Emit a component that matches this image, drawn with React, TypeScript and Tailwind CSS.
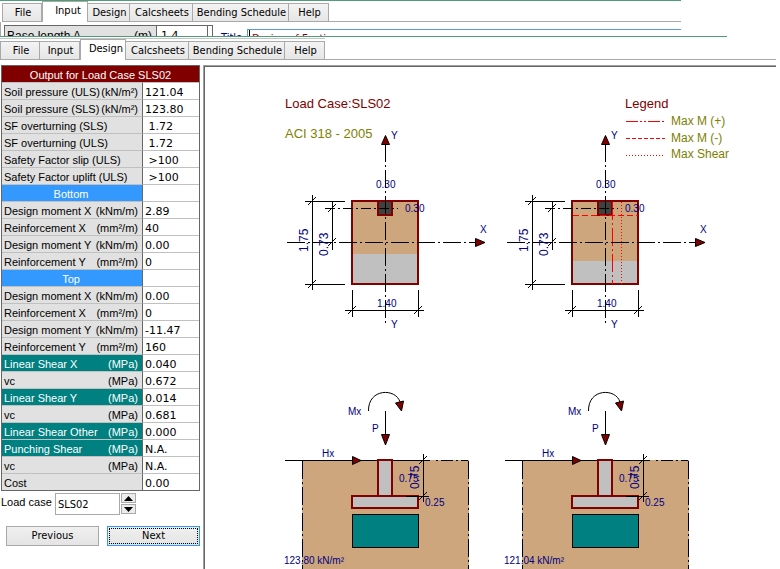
import React, { useState } from "react";

type TabBarProps = { active: string; label: string };

const TAB_WIDTHS: Record<string, string> = {
  File: "w-10",
  Input: "w-10",
  Design: "w-[42px]",
  Calcsheets: "w-[63px]",
  "Bending Schedule": "w-24",
  Help: "w-10",
};

const TABS = ["File", "Input", "Design", "Calcsheets", "Bending Schedule", "Help"];

function TabBar({ active, label }: TabBarProps) {
  return (
    <nav
      aria-label={label}
      className="flex h-[21px] items-end border-b border-[#a9a9a9] font-['DejaVu_Sans_Condensed','DejaVu_Sans',sans-serif] text-[11px] leading-4"
    >
      {TABS.map((tab) =>
        tab === active ? (
          <button
            key={tab}
            type="button"
            aria-current="page"
            className="-mb-px h-[21px] w-[46px] shrink-0 whitespace-nowrap border border-b-0 border-[#a9a9a9] bg-white pb-0.5 pl-1.5 text-black"
          >
            {tab}
          </button>
        ) : (
          <button
            key={tab}
            type="button"
            className={`${TAB_WIDTHS[tab]} h-[18px] shrink-0 whitespace-nowrap border border-b-0 border-l-0 border-[#a9a9a9] bg-linear-to-b from-[#f3f3f3] to-[#e6e6e6] pl-0.5 text-black first:border-l`}
          >
            {tab}
          </button>
        ),
      )}
    </nav>
  );
}

function InputWindow() {
  return (
    <section className="mr-[99px] h-9 overflow-hidden border-t border-[#4f9d76]">
      <div className="pl-0.5">
        <TabBar active="Input" label="Input window" />
      </div>
      <div className="flex items-start border-l border-[#a9a9a9] pl-[3px] pt-[3px]">
        <div className="flex h-6 w-[209px] shrink-0 border border-b-0 border-[#666] font-['Liberation_Sans',sans-serif] text-[12px] leading-5">
          <label htmlFor="base-length" className="flex w-[151px] justify-between bg-[#e1e1e1] pl-0.5 pr-1">
            <span>Base length A</span>
            <span>(m)</span>
          </label>
          <input
            id="base-length"
            defaultValue="1.4"
            className="h-5 w-[52px] border-x border-[#666] pl-1 font-['DejaVu_Sans',sans-serif] text-[11px]"
          />
        </div>
        <label
          htmlFor="title"
          className="ml-2 mt-1 w-[26px] font-['DejaVu_Sans_Condensed','DejaVu_Sans',sans-serif] text-[11px] leading-[18px] text-[#000080]"
        >
          Title
        </label>
        <div className="mt-1 flex h-5 min-w-0 flex-1 border border-r-0 border-[#5b9bd5] pl-px">
          <span className="w-px bg-black" />
          <input
            id="title"
            defaultValue="Design of Footing"
            className="min-w-0 flex-1 pl-0.5 font-['DejaVu_Sans_Condensed','DejaVu_Sans',sans-serif] text-[11px] text-[#800000]"
          />
        </div>
      </div>
    </section>
  );
}

type Row = { label: string; unit?: string; value: string; kind?: "section" | "shear" };

const ROWS: Row[] = [
  { label: "Soil pressure (ULS)", unit: "(kN/m²)", value: "121.04" },
  { label: "Soil pressure (SLS)", unit: "(kN/m²)", value: "123.80" },
  { label: "SF overturning (SLS)", value: " 1.72" },
  { label: "SF overturning (ULS)", value: " 1.72" },
  { label: "Safety Factor slip (ULS)", value: " >100" },
  { label: "Safety Factor uplift (ULS)", value: " >100" },
  { label: "Bottom", value: "", kind: "section" },
  { label: "Design moment X", unit: "(kNm/m)", value: "2.89" },
  { label: "Reinforcement X", unit: "(mm²/m)", value: "40" },
  { label: "Design moment Y", unit: "(kNm/m)", value: "0.00" },
  { label: "Reinforcement Y", unit: "(mm²/m)", value: "0" },
  { label: "Top", value: "", kind: "section" },
  { label: "Design moment X", unit: "(kNm/m)", value: "0.00" },
  { label: "Reinforcement X", unit: "(mm²/m)", value: "0" },
  { label: "Design moment Y", unit: "(kNm/m)", value: "-11.47" },
  { label: "Reinforcement Y", unit: "(mm²/m)", value: "160" },
  { label: "Linear Shear X", unit: "(MPa)", value: "0.040", kind: "shear" },
  { label: "vc", unit: "(MPa)", value: "0.672" },
  { label: "Linear Shear Y", unit: "(MPa)", value: "0.014", kind: "shear" },
  { label: "vc", unit: "(MPa)", value: "0.681" },
  { label: "Linear Shear Other", unit: "(MPa)", value: "0.000", kind: "shear" },
  { label: "Punching Shear", unit: "(MPa)", value: "N.A.", kind: "shear" },
  { label: "vc", unit: "(MPa)", value: "N.A." },
  { label: "Cost", value: "0.00" },
];

function rowTone(kind?: Row["kind"]) {
  if (kind === "section") return "bg-[#3399ff] text-white";
  if (kind === "shear") return "bg-[#008080] text-white";
  return "bg-[#e1e1e1] text-black";
}

function ResultsTable() {
  return (
    <table className="ml-px w-[199px] table-fixed border-separate border-spacing-0 border border-[#666] font-['Liberation_Sans',sans-serif] text-[11px] leading-[14px]">
      <colgroup>
        <col className="w-[141px]" />
        <col />
      </colgroup>
      <thead>
        <tr>
          <th colSpan={2} className="h-4 bg-[#800000] p-0 pt-0.5 text-center font-normal text-white">
            Output for Load Case SLS02
          </th>
        </tr>
      </thead>
      <tbody>
        {ROWS.map((row, i) => (
          <tr key={i}>
            <th
              scope="row"
              className={`h-[17px] border-r border-t border-r-[#666] border-t-[#c0c0c0] p-0 font-normal ${rowTone(row.kind)}`}
            >
              <div
                className={`flex whitespace-nowrap pl-0.5 pr-1 pt-0.5 ${row.kind === "section" ? "justify-center" : "justify-between"}`}
              >
                <span>{row.label}</span>
                {row.unit && <span>{row.unit}</span>}
              </div>
            </th>
            <td className="whitespace-pre border-t border-[#c0c0c0] bg-white p-0 pl-0.5 pt-[3px] font-['DejaVu_Sans',sans-serif] leading-[13px] text-black">
              {row.value}
            </td>
          </tr>
        ))}
      </tbody>
    </table>
  );
}

function LoadCasePicker() {
  const [loadCase, setLoadCase] = useState(2);
  const name = `SLS0${loadCase}`;
  return (
    <div className="mt-0.5 flex items-start pl-px">
      <label htmlFor="load-case" className="w-[54px] font-['Liberation_Sans',sans-serif] text-[11px] leading-[18px]">
        Load case
      </label>
      <input
        id="load-case"
        readOnly
        value={name}
        className="h-[22px] w-[65px] border border-[#a9a9a9] pl-0.5 font-['DejaVu_Sans_Condensed','DejaVu_Sans',sans-serif] text-[11px]"
      />
      <div className="ml-px flex flex-col gap-px">
        <button
          type="button"
          aria-label="Next load case"
          onClick={() => setLoadCase((n) => Math.min(9, n + 1))}
          className="flex h-[10px] w-[15px] items-center justify-center border border-[#a9a9a9] bg-[#ececec]"
        >
          <svg width="9" height="5" viewBox="0 0 9 5" aria-hidden="true">
            <path d="M0 5 4.500 0 9 5z" />
          </svg>
        </button>
        <button
          type="button"
          aria-label="Previous load case"
          onClick={() => setLoadCase((n) => Math.max(1, n - 1))}
          className="flex h-[10px] w-[15px] items-center justify-center border border-[#a9a9a9] bg-[#ececec]"
        >
          <svg width="9" height="5" viewBox="0 0 9 5" aria-hidden="true">
            <path d="M0 0 4.500 5 9 0z" />
          </svg>
        </button>
      </div>
    </div>
  );
}

const DASH_DOT = "18 3 2 3";

function Slash({ x, y }: { x: number; y: number }) {
  return <path d={`M${x - 4} ${y + 4}L${x + 4} ${y - 4}`} stroke="#000" shapeRendering="auto" />;
}

function PlanView({ dx, greyFrom, maxLines }: { dx: number; greyFrom: number; maxLines?: boolean }) {
  return (
    <g transform={`translate(${dx} 0)`}>
      <rect x="352" y="201" width="66" height="83" fill="#cda67d" />
      <rect x="352" y={greyFrom} width="66" height={284 - greyFrom} fill="#c0c0c0" />
      <rect x="352" y="201" width="66" height="83" fill="none" stroke="#800000" strokeWidth="2" />
      <rect x="378" y="201" width="14" height="14" fill="#404040" stroke="#800000" strokeWidth="2" />
      {maxLines && (
        <g stroke="#f00">
          <path d="M353 215.500H418" strokeDasharray="6 3" />
          <path d="M392.500 202V284" strokeDasharray="18 3 2 3" />
          <path d="M401.500 202V284" strokeDasharray="1 2" />
        </g>
      )}
      <g stroke="#000" fill="none">
        <path d="M385.500 144V324" strokeDasharray={DASH_DOT} />
        <path d="M287 242.500H475" strokeDasharray={DASH_DOT} />
        <path d="M325 208.500H398" strokeDasharray="10 3 2 3" />
        <path d="M312.500 195V290M305 201.500H345M305 284.500H345" />
        <path d="M332.500 202V250" />
        <path d="M352.500 290V317M418.500 290V317M345 310.500H424" />
      </g>
      <Slash x={312} y={201} />
      <Slash x={312} y={284} />
      <Slash x={332} y={208} />
      <Slash x={332} y={242} />
      <Slash x={352} y={310} />
      <Slash x={418} y={310} />
      <g fill="#800000" stroke="#000" shapeRendering="auto">
        <path d="M381.500 144.500H389.500L385.500 135.500z" />
        <path d="M475.500 238.500V246.500L485 242.500z" />
      </g>
      <g fill="#000080" fontSize="10">
        <text x="391" y="139">Y</text>
        <text x="480" y="233">X</text>
        <text x="391" y="328">Y</text>
        <text x="376" y="188">0.30</text>
        <text x="405" y="212">0.30</text>
        <text x="377" y="307">1.40</text>
        <g fontSize="12">
          <text transform="translate(308 252) rotate(-90)">1.75</text>
          <text transform="translate(328 256) rotate(-90)">0.73</text>
        </g>
      </g>
    </g>
  );
}

function ElevationView({ dx, pressure }: { dx: number; pressure: string }) {
  return (
    <g transform={`translate(${dx} 0)`}>
      <rect x="302" y="460" width="167" height="109" fill="#cda67d" />
      <g stroke="#000" fill="none">
        <path d="M302.500 461V569M468.500 461V569" strokeDasharray={DASH_DOT} />
        <path d="M285 460.500H430" />
        <path d="M436 460.500H468" strokeDasharray="2 3 12 3" />
      </g>
      <g fill="#c0c0c0" stroke="#800000" strokeWidth="2">
        <rect x="378" y="460" width="14" height="36" />
        <rect x="352" y="496" width="66" height="12" />
      </g>
      <rect x="352.500" y="514.500" width="66" height="33" fill="#008080" stroke="#000" />
      <path d="M423.500 454V502M406 496.500H429M385.500 411V434" stroke="#000" />
      <Slash x={423} y={460} />
      <Slash x={423} y={496} />
      <path d="M368.500 411C368 388 396 388 400 402" fill="none" stroke="#000" shapeRendering="auto" />
      <g fill="#800000" stroke="#000" shapeRendering="auto">
        <path d="M352.500 456.500V464.500L361 460.500z" />
        <path d="M381.500 434.500H389.500L385.500 445z" />
        <path d="M395.500 403 403.500 401 401.500 411z" />
      </g>
      <g fill="#000080" fontSize="10">
        <text x="348" y="415">Mx</text>
        <text x="372" y="432">P</text>
        <text x="322" y="457">Hx</text>
        <text x="399" y="482">0.75</text>
        <text x="425" y="506">0.25</text>
        <text x="284" y="564">{pressure}</text>
        <text transform="translate(419 489) rotate(-90)" fontSize="12">
          0.75
        </text>
      </g>
    </g>
  );
}

function FootingDrawing() {
  return (
    <svg
      role="img"
      aria-label="Footing plan and elevation"
      width="571"
      height="502"
      viewBox="205 67 571 502"
      shapeRendering="crispEdges"
      className="block font-['Liberation_Sans',sans-serif]"
    >
      <g fontSize="13">
        <text x="285" y="108" fill="#800000">Load Case:SLS02</text>
        <text x="285" y="138" fill="#808000">ACI 318 - 2005</text>
        <text x="625" y="108" fill="#800000">Legend</text>
      </g>
      <g stroke="#f00">
        <path d="M626 121.500H665" strokeDasharray="12 2 2 2 2 2" />
        <path d="M626 138.500H665" strokeDasharray="4 2" />
        <path d="M626 155.500H665" strokeDasharray="1 2" />
      </g>
      <g fontSize="12" fill="#808000">
        <text x="671" y="125">Max M (+)</text>
        <text x="671" y="142">Max M (-)</text>
        <text x="671" y="158">Max Shear</text>
      </g>
      <PlanView dx={0} greyFrom={254} />
      <PlanView dx={220} greyFrom={261} maxLines />
      <ElevationView dx={0} pressure="123.80 kN/m²" />
      <ElevationView dx={220} pressure="121.04 kN/m²" />
    </svg>
  );
}

function DesignWindow() {
  return (
    <section>
      <div className="mr-[53px] border-t border-[#4f9d76]" />
      <div className="mr-1">
        <div className="h-0.5 w-[325px] border-b border-[#c4c4c4]" />
        <TabBar active="Design" label="Design window" />
      </div>
      <div className="mr-1 mt-[5px] flex">
        <div className="w-[203px] shrink-0">
          <ResultsTable />
          <LoadCasePicker />
          <div className="mt-[11px] flex gap-2 pl-1.5 font-['DejaVu_Sans_Condensed','DejaVu_Sans',sans-serif] text-[11px]">
            <button
              type="button"
              className="h-5 w-[93px] border border-[#a9a9a9] bg-linear-to-b from-[#f0f0f0] to-[#e4e4e4]"
            >
              Previous
            </button>
            <button
              type="button"
              className="h-5 w-[93px] border border-[#3399ff] bg-linear-to-b from-[#f0f0f0] to-[#e4e4e4] p-px"
            >
              <span className="flex h-full items-center justify-center border border-dotted border-black">Next</span>
            </button>
          </div>
        </div>
        <main className="min-w-0 flex-1 border-l border-t border-[#a0a0a0]">
          <div className="overflow-hidden border-l border-t border-[#666]">
            <FootingDrawing />
          </div>
        </main>
      </div>
    </section>
  );
}

export default function App() {
  return (
    <div className="min-h-screen overflow-hidden bg-white text-black">
      <InputWindow />
      <DesignWindow />
    </div>
  );
}
